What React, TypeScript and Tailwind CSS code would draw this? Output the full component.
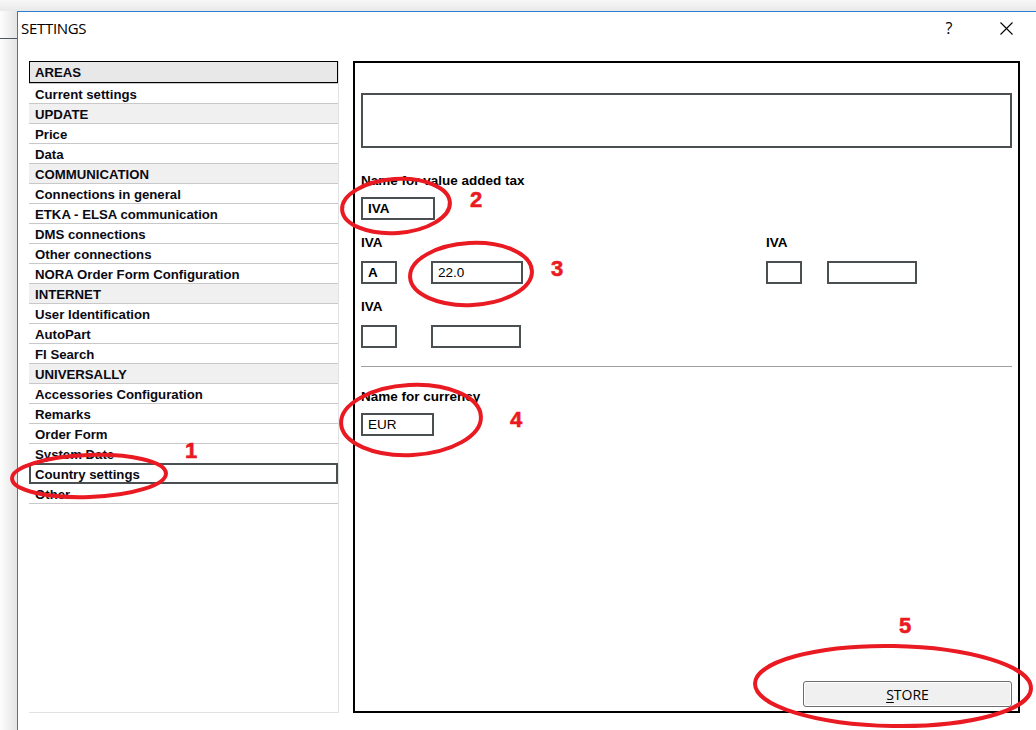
import React from "react";

type Row = { label: string; header?: boolean; selected?: boolean };

const rows: Row[] = [
  { label: "Current settings" },
  { label: "UPDATE", header: true },
  { label: "Price" },
  { label: "Data" },
  { label: "COMMUNICATION", header: true },
  { label: "Connections in general" },
  { label: "ETKA - ELSA communication" },
  { label: "DMS connections" },
  { label: "Other connections" },
  { label: "NORA Order Form Configuration" },
  { label: "INTERNET", header: true },
  { label: "User Identification" },
  { label: "AutoPart" },
  { label: "FI Search" },
  { label: "UNIVERSALLY", header: true },
  { label: "Accessories Configuration" },
  { label: "Remarks" },
  { label: "Order Form" },
  { label: "System Date" },
  { label: "Country settings", selected: true },
  { label: "Other" },
];

function Field({ w, value, bold }: { w: string; value?: string; bold?: boolean }) {
  return (
    <div
      className={`${w} h-[23px] border-2 border-[#4a4f52] flex items-center pl-[5px] pt-px text-[13.5px] text-black ${
        bold ? "font-bold" : "font-normal"
      }`}
    >
      {value}
    </div>
  );
}

function Label({ children }: { children: React.ReactNode }) {
  return <div className="h-[16px] leading-[16px] text-[13.5px] font-bold text-black">{children}</div>;
}

function Annotations() {
  const red = "#ea1a22";
  return (
    <svg className="absolute inset-0 pointer-events-none" width="1036" height="730" viewBox="0 0 1036 730">
      <g fill="none" stroke={red} strokeWidth="4">
        <ellipse cx="89" cy="476" rx="77" ry="21" transform="rotate(-2 89 476)" />
        <ellipse cx="396" cy="206" rx="54" ry="27" transform="rotate(-4 396 206)" />
        <ellipse cx="471" cy="274" rx="61" ry="31" transform="rotate(-3 471 274)" />
        <ellipse cx="411" cy="420" rx="70" ry="35" transform="rotate(-3 411 420)" />
        <ellipse cx="893" cy="686" rx="138" ry="40" transform="rotate(1 893 686)" />
      </g>
      <g fill={red} stroke={red} strokeWidth="0.6" fontFamily="'Liberation Sans', Arial, sans-serif" fontWeight="bold" fontSize="22" textAnchor="middle">
        <text x="191" y="458">1</text>
        <text x="476" y="207">2</text>
        <text x="557" y="276">3</text>
        <text x="516" y="427">4</text>
        <text x="905" y="633">5</text>
      </g>
    </svg>
  );
}

export default function App() {
  return (
    <div className="relative w-[1036px] h-[730px] overflow-hidden bg-[#f5f5f5] flex flex-col font-['Liberation_Sans',Arial,sans-serif]">
      {/* desktop strip above window */}
      <div className="h-[11px] shrink-0 bg-gradient-to-b from-[#f7f7f7] to-[#e9e9e9]" />
      <div className="flex flex-1 min-h-0">
        {/* desktop strip left of window */}
        <div className="w-[17px] shrink-0 bg-gradient-to-r from-[#fdfdfd] to-[#e4e4e4] pt-[27px]">
          <div className="h-px bg-[#4d5560]" />
        </div>

        {/* dialog */}
        <div className="flex-1 flex flex-col bg-white border-l border-t border-[#2a7dd1]">
          {/* title bar */}
          <div className="h-[32px] shrink-0 flex items-center pl-[3px] pr-[20px] font-['Open_Sans','Noto_Sans',sans-serif] text-[15px] text-black">
            <span className="tracking-[-0.3px]">SETTINGS</span>
            <div className="flex-1" />
            <span className="w-[20px] text-center text-[16px]">?</span>
            <div className="w-[37px]" />
            <div className="w-[20px] flex justify-center">
              <svg width="13" height="13" viewBox="0 0 13 13">
                <path d="M0.5 0.5 L12.5 12.5 M12.5 0.5 L0.5 12.5" stroke="#000" strokeWidth="1.1" />
              </svg>
            </div>
          </div>

          {/* body */}
          <div className="flex pl-[11px] pt-[17px]">
            {/* areas list */}
            <div className="w-[310px] h-[652px] shrink-0 border-r border-b border-[#e1e1e1] flex flex-col text-[13.2px] font-bold text-[#0a0a14]">
              <div className="h-[22px] shrink-0 border border-black bg-[#e8e8e8] flex items-center pl-[5px] pt-[2px]">AREAS</div>
              <div className="h-px shrink-0 bg-[#c8c8c8]" />
              {rows.map((r) =>
                r.selected ? (
                  <div
                    key={r.label}
                    className="h-[21px] -mt-px shrink-0 border-2 border-[#4a4f52] flex items-center pl-[4px] pt-[2px]"
                  >
                    {r.label}
                  </div>
                ) : (
                  <div
                    key={r.label}
                    className={`h-[20px] shrink-0 border-b border-[#c8c8c8] flex items-center pl-[6px] pt-[3px] ${
                      r.header ? "bg-[#f0f0f0]" : ""
                    }`}
                  >
                    {r.label}
                  </div>
                )
              )}
            </div>

            {/* settings panel */}
            <div className="ml-[14px] w-[667px] h-[652px] shrink-0 border-2 border-black flex flex-col px-[6px] pt-[30px] pb-[4px]">
              <div className="h-[55px] border-2 border-[#4a4f52]" />

              <div className="mt-[25px]">
                <Label>Name for value added tax</Label>
              </div>
              <div className="mt-[8px]">
                <Field w="w-[74px]" value="IVA" bold />
              </div>

              <div className="mt-[15px] flex">
                <div className="w-[405px] shrink-0">
                  <Label>IVA</Label>
                  <div className="mt-[10px] flex">
                    <Field w="w-[36px]" value="A" bold />
                    <div className="ml-[34px]">
                      <Field w="w-[92px]" value="22.0" />
                    </div>
                  </div>
                  <div className="mt-[15px]">
                    <Label>IVA</Label>
                  </div>
                  <div className="mt-[10px] flex">
                    <Field w="w-[36px]" />
                    <div className="ml-[34px]">
                      <Field w="w-[90px]" />
                    </div>
                  </div>
                </div>
                <div>
                  <Label>IVA</Label>
                  <div className="mt-[10px] flex">
                    <Field w="w-[36px]" />
                    <div className="ml-[25px]">
                      <Field w="w-[90px]" />
                    </div>
                  </div>
                </div>
              </div>

              <div className="mt-[18px] h-px bg-[#a0a0a0]" />

              <div className="mt-[22px]">
                <Label>Name for currency</Label>
              </div>
              <div className="mt-[8px]">
                <Field w="w-[73px]" value="EUR" />
              </div>

              <div className="mt-auto self-end w-[209px] h-[26px] rounded-[3px] border border-[#6d6d6d] bg-[#f0f0f0] shadow-[inset_0_0_0_1px_#ffffff] flex items-center justify-center font-['Open_Sans','Noto_Sans',sans-serif] text-[14px] text-black">
                <span>
                  <span className="underline underline-offset-2">S</span>TORE
                </span>
              </div>
            </div>
          </div>
        </div>
      </div>

      <Annotations />
    </div>
  );
}
